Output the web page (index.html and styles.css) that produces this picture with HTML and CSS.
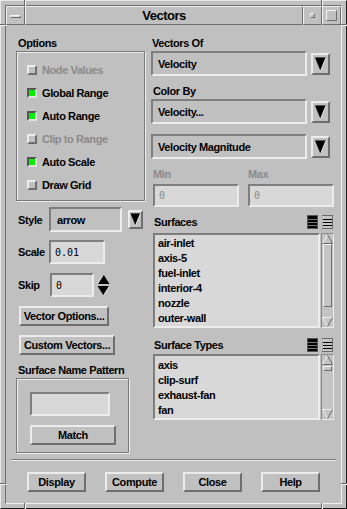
FILE: index.html
```html
<!DOCTYPE html>
<html>
<head>
<meta charset="utf-8">
<title>Vectors</title>
<link rel="stylesheet" href="styles.css">
</head>
<body>
<div class="window">
  <span class="mark mark-v mark-t1"></span>
  <span class="mark mark-v mark-t2"></span>
  <span class="mark mark-v mark-b1"></span>
  <span class="mark mark-v mark-b2"></span>
  <span class="mark mark-h mark-l1"></span>
  <span class="mark mark-h mark-r1"></span>
  <span class="mark mark-h mark-l2"></span>
  <span class="mark mark-h mark-r2"></span>
  <div class="inner">
    <div class="titlebar">
      <div class="tb-btn"><span class="menu-bar"></span></div>
      <div class="tb-title">Vectors</div>
      <div class="tb-btn"><span class="min-sq"></span></div>
      <div class="tb-btn"><span class="max-sq"></span></div>
    </div>
    <div class="body">
      <div class="main">
        <div class="col-left">
          <div class="label">Options</div>
          <div class="group options">
            <div class="check disabled"><span class="box"></span>Node Values</div>
            <div class="check"><span class="box on"></span>Global Range</div>
            <div class="check"><span class="box on"></span>Auto Range</div>
            <div class="check disabled"><span class="box"></span>Clip to Range</div>
            <div class="check"><span class="box on"></span>Auto Scale</div>
            <div class="check"><span class="box"></span>Draw Grid</div>
          </div>
          <div class="row style-row">
            <span class="rlabel">Style</span>
            <div class="option w-style">arrow</div>
            <span class="arrow-btn small">
              <svg width="11" height="15" viewBox="0 0 11 15"><polygon points="0.5,1.5 10.5,1.5 5.5,13.5" fill="#000"/><line x1="10.5" y1="1.5" x2="5.5" y2="13.5" stroke="#e8e8e8" stroke-width="1"/><line x1="0.5" y1="1.5" x2="10" y2="1.5" stroke="#555" stroke-width="1"/></svg>
            </span>
          </div>
          <div class="row scale-row">
            <span class="rlabel">Scale</span>
            <div class="field w-scale">0.01</div>
          </div>
          <div class="row skip-row">
            <span class="rlabel skip">Skip</span>
            <div class="field w-skip">0</div>
            <span class="spinner">
              <svg width="13" height="22" viewBox="0 0 13 22"><polygon points="6.5,0.5 12.5,10 0.5,10" fill="#000"/><line x1="6.5" y1="0.5" x2="0.5" y2="10" stroke="#ececec"/><polygon points="0.5,12 12.5,12 6.5,21.5" fill="#000"/><line x1="12.5" y1="12" x2="6.5" y2="21.5" stroke="#ececec"/></svg>
            </span>
          </div>
          <div class="btn btn-vo">Vector Options...</div>
          <div class="btn btn-cv">Custom Vectors...</div>
          <div class="label pattern-label">Surface Name Pattern</div>
          <div class="group pattern">
            <div class="field w-pattern"></div>
            <div class="btn btn-match">Match</div>
          </div>
        </div>
        <div class="col-right">
          <div class="label first">Vectors Of</div>
          <div class="row opt-row">
            <div class="option w-wide">Velocity</div>
            <span class="arrow-btn">
              <svg width="15" height="18" viewBox="0 0 15 18"><polygon points="2,2.5 13,2.5 7.5,16" fill="#000"/><line x1="13" y1="2.5" x2="7.5" y2="16" stroke="#e8e8e8"/><line x1="2" y1="2.5" x2="12.5" y2="2.5" stroke="#555"/></svg>
            </span>
          </div>
          <div class="label gap8">Color By</div>
          <div class="row opt-row">
            <div class="option w-wide">Velocity...</div>
            <span class="arrow-btn">
              <svg width="15" height="18" viewBox="0 0 15 18"><polygon points="2,2.5 13,2.5 7.5,16" fill="#000"/><line x1="13" y1="2.5" x2="7.5" y2="16" stroke="#e8e8e8"/><line x1="2" y1="2.5" x2="12.5" y2="2.5" stroke="#555"/></svg>
            </span>
          </div>
          <div class="row opt-row gap10">
            <div class="option w-wide">Velocity Magnitude</div>
            <span class="arrow-btn">
              <svg width="15" height="18" viewBox="0 0 15 18"><polygon points="2,2.5 13,2.5 7.5,16" fill="#000"/><line x1="13" y1="2.5" x2="7.5" y2="16" stroke="#e8e8e8"/><line x1="2" y1="2.5" x2="12.5" y2="2.5" stroke="#555"/></svg>
            </span>
          </div>
          <div class="minmax-labels">
            <span class="disabled">Min</span>
            <span class="disabled">Max</span>
          </div>
          <div class="minmax">
            <div class="field disabled-field">0</div>
            <div class="field disabled-field">0</div>
          </div>
          <div class="list-head">
            <span class="lh-label">Surfaces</span>
            <span class="lh-icons">
              <svg width="11" height="14" viewBox="0 0 11 14"><rect x="0" y="0" width="11" height="14" fill="#555"/><rect x="1" y="1" width="9" height="12" fill="#000"/><rect x="1" y="4" width="9" height="1" fill="#777"/><rect x="1" y="7" width="9" height="1" fill="#777"/><rect x="1" y="10" width="9" height="1" fill="#777"/></svg>
              <svg width="11" height="14" viewBox="0 0 11 14"><rect x="0.5" y="0.5" width="10" height="13" fill="#c4c4c4" stroke="#6a6a6a"/><line x1="1" y1="1" x2="1" y2="13" stroke="#ececec"/><line x1="1" y1="4.5" x2="10" y2="4.5" stroke="#000"/><line x1="1" y1="7.5" x2="10" y2="7.5" stroke="#000"/><line x1="1" y1="10.5" x2="10" y2="10.5" stroke="#000"/></svg>
            </span>
          </div>
          <div class="list-row surfaces">
            <div class="list">
              <div class="item">air-inlet</div>
              <div class="item">axis-5</div>
              <div class="item">fuel-inlet</div>
              <div class="item">interior-4</div>
              <div class="item">nozzle</div>
              <div class="item">outer-wall</div>
            </div>
            <div class="scroll">
              <svg class="sarrow" width="11" height="10" viewBox="0 0 11 10"><polygon points="5.5,0.5 10.5,9.5 0.5,9.5" fill="#c4c4c4"/><line x1="5.5" y1="0.5" x2="0.5" y2="9.5" stroke="#f0f0f0"/><polyline points="5.5,0.5 10.5,9.5 0.5,9.5" fill="none" stroke="#6a6a6a"/></svg>
              <div class="thumb big"></div>
              <div class="track-space"></div>
              <svg class="sarrow" width="11" height="10" viewBox="0 0 11 10"><polygon points="0.5,0.5 10.5,0.5 5.5,9.5" fill="#c4c4c4"/><polyline points="5.5,9.5 0.5,0.5 10.5,0.5" fill="none" stroke="#f0f0f0"/><line x1="10.5" y1="0.5" x2="5.5" y2="9.5" stroke="#6a6a6a"/></svg>
            </div>
          </div>
          <div class="list-head gap10">
            <span class="lh-label">Surface Types</span>
            <span class="lh-icons">
              <svg width="11" height="14" viewBox="0 0 11 14"><rect x="0" y="0" width="11" height="14" fill="#555"/><rect x="1" y="1" width="9" height="12" fill="#000"/><rect x="1" y="4" width="9" height="1" fill="#777"/><rect x="1" y="7" width="9" height="1" fill="#777"/><rect x="1" y="10" width="9" height="1" fill="#777"/></svg>
              <svg width="11" height="14" viewBox="0 0 11 14"><rect x="0.5" y="0.5" width="10" height="13" fill="#c4c4c4" stroke="#6a6a6a"/><line x1="1" y1="1" x2="1" y2="13" stroke="#ececec"/><line x1="1" y1="4.5" x2="10" y2="4.5" stroke="#000"/><line x1="1" y1="7.5" x2="10" y2="7.5" stroke="#000"/><line x1="1" y1="10.5" x2="10" y2="10.5" stroke="#000"/></svg>
            </span>
          </div>
          <div class="list-row types">
            <div class="list">
              <div class="item">axis</div>
              <div class="item">clip-surf</div>
              <div class="item">exhaust-fan</div>
              <div class="item">fan</div>
            </div>
            <div class="scroll">
              <svg class="sarrow" width="11" height="10" viewBox="0 0 11 10"><polygon points="5.5,0.5 10.5,9.5 0.5,9.5" fill="#c4c4c4"/><line x1="5.5" y1="0.5" x2="0.5" y2="9.5" stroke="#f0f0f0"/><polyline points="5.5,0.5 10.5,9.5 0.5,9.5" fill="none" stroke="#6a6a6a"/></svg>
              <div class="thumb small-thumb"></div>
              <div class="track-space"></div>
              <svg class="sarrow" width="11" height="10" viewBox="0 0 11 10"><polygon points="0.5,0.5 10.5,0.5 5.5,9.5" fill="#c4c4c4"/><polyline points="5.5,9.5 0.5,0.5 10.5,0.5" fill="none" stroke="#f0f0f0"/><line x1="10.5" y1="0.5" x2="5.5" y2="9.5" stroke="#6a6a6a"/></svg>
            </div>
          </div>
        </div>
      </div>
      <div class="separator"></div>
      <div class="actions">
        <div class="btn act">Display</div>
        <div class="btn act">Compute</div>
        <div class="btn act">Close</div>
        <div class="btn act">Help</div>
      </div>
    </div>
  </div>
</div>
</body>
</html>
```

FILE: styles.css
```css
* { box-sizing: border-box; }
html, body { margin: 0; padding: 0; }
body {
  width: 347px;
  height: 509px;
  overflow: hidden;
  background: #c0c0c0;
  font-family: "Liberation Sans", Arial, sans-serif;
  font-weight: bold;
  font-size: 11px;
  letter-spacing: -0.4px;
  color: #000;
}

/* window frame */
.window {
  position: relative;
  width: 347px;
  height: 509px;
  background: #c0c0c0;
  border: 1px solid;
  border-color: #e8e8e8 #1a1a1a #1a1a1a #e8e8e8;
  padding: 4px;
}
.mark { position: absolute; display: block; }
.mark-v { width: 2px; height: 6px; border-left: 1px solid #6a6a6a; border-right: 1px solid #f0f0f0; }
.mark-h { width: 6px; height: 2px; border-top: 1px solid #6a6a6a; border-bottom: 1px solid #f0f0f0; }
.mark-t1 { left: 23px; top: -1px; }
.mark-t2 { left: 320px; top: -1px; }
.mark-b1 { left: 23px; bottom: -1px; }
.mark-b2 { left: 320px; bottom: -1px; }
.mark-l1 { left: -1px; top: 23px; }
.mark-r1 { right: -1px; top: 23px; }
.mark-l2 { left: -1px; top: 482px; }
.mark-r2 { right: -1px; top: 482px; }

.inner {
  height: 100%;
  border: 1px solid;
  border-color: #6e6e6e #f0f0f0 #f0f0f0 #6e6e6e;
  display: flex;
  flex-direction: column;
}

/* title bar */
.titlebar { display: flex; height: 19px; flex: none; }
.tb-btn, .tb-title {
  height: 19px;
  border: 1px solid;
  border-color: #f0f0f0 #6e6e6e #6e6e6e #f0f0f0;
  display: flex;
  align-items: center;
  justify-content: center;
}
.tb-btn { width: 19px; }
.tb-title { width: 278px; font-size: 13px; letter-spacing: -0.5px; }
.menu-bar {
  display: block; width: 11px; height: 3px;
  background: #d8d8d8;
  border: 1px solid; border-color: #f4f4f4 #6e6e6e #6e6e6e #f4f4f4;
  margin-top: 1px;
}
.min-sq {
  display: block; width: 5px; height: 5px;
  border: 1px solid; border-color: #f4f4f4 #6e6e6e #6e6e6e #f4f4f4;
}
.max-sq {
  display: block; width: 11px; height: 11px;
  border: 1px solid; border-color: #f4f4f4 #6e6e6e #6e6e6e #f4f4f4;
}

/* body */
.body {
  flex: 1;
  display: flex;
  flex-direction: column;
  padding: 11px 0 0 0;
}
.main { display: flex; gap: 6px; padding-left: 10px; padding-right: 7px; }
.col-left { width: 129px; display: flex; flex-direction: column; }
.col-right { width: 183px; display: flex; flex-direction: column; }

.label { height: 14px; line-height: 14px; padding-left: 2px; white-space: nowrap; }
.label.first { padding-left: 1px; }
.pattern-label { margin-top: 8px; }
.gap8 { margin-top: 8px; }
.gap10 { margin-top: 10px; }

.group {
  margin-top: 1px;
  border: 1px solid #7a7a7a;
  box-shadow: inset 1px 1px 0 #ececec, 1px 1px 0 #ececec;
}
.options { height: 150px; padding: 6px 0 0 10px; }
.check { height: 23px; display: flex; align-items: center; gap: 5px; white-space: nowrap; }
.box {
  width: 10px; height: 10px; flex: none;
  border: 2px solid;
  border-color: #ececec #6e6e6e #6e6e6e #ececec;
  background: #c0c0c0;
}
.box.on { border-color: #555 #e0e0e0 #e0e0e0 #555; background: #00f000; }
.disabled { color: #8a8a8a; }

.row { display: flex; align-items: center; }
.rlabel { width: 33px; padding-left: 2px; flex: none; }
.rlabel.skip { width: 34px; }
.style-row { margin-top: 6px; height: 25px; }
.scale-row { margin-top: 8px; height: 24px; }
.skip-row { margin-top: 9px; height: 24px; }

.option {
  height: 25px;
  border: 2px solid;
  border-color: #7e7e7e #ececec #ececec #7e7e7e;
  display: flex;
  align-items: center;
  padding-left: 5px;
  white-space: nowrap;
}
.w-style { width: 73px; padding-left: 6px; }
.w-wide { width: 156px; }

.arrow-btn {
  width: 19px; height: 22px; margin-left: 4px;
  border: 2px solid;
  border-color: #ececec #6e6e6e #6e6e6e #ececec;
  display: flex;
}
.arrow-btn.small { width: 15px; height: 19px; margin-left: 6px; }
.arrow-btn svg { display: block; }

.field {
  height: 24px;
  border: 2px solid;
  border-color: #7e7e7e #ececec #ececec #7e7e7e;
  background: #d8d8d8;
  display: flex;
  align-items: center;
  padding-left: 4px;
  font-family: "DejaVu Sans Mono", "Liberation Mono", monospace;
  font-weight: normal;
  font-size: 10px;
  letter-spacing: 0;
}
.w-scale { width: 56px; }
.w-skip { width: 44px; }
.spinner { margin-left: 3px; width: 13px; height: 22px; display: flex; }
.spinner svg { display: block; }

.btn {
  height: 20px;
  border: 2px solid;
  border-color: #ececec #6e6e6e #6e6e6e #ececec;
  display: flex;
  align-items: center;
  justify-content: center;
  white-space: nowrap;
}
.btn-vo { margin-top: 9px; margin-left: 3px; width: 90px; }
.btn-cv { margin-top: 9px; margin-left: 3px; width: 96px; }
.pattern { width: 113px; height: 75px; padding: 13px 0 0 13px; }
.w-pattern { width: 80px; }
.btn-match { margin-top: 9px; width: 86px; }

/* right column */
.opt-row { margin-top: 1px; height: 25px; }
.opt-row.gap10 { margin-top: 10px; }
.minmax-labels {
  margin-top: 8px; height: 14px; line-height: 14px;
  display: grid; grid-template-columns: 86px 86px; column-gap: 9px;
  padding-left: 2px;
}
.minmax {
  margin-top: 3px; margin-left: 2px;
  display: grid; grid-template-columns: 86px 86px; column-gap: 9px;
}
.minmax .field { height: 23px; }
.disabled-field { color: #8a8a8a; }

.list-head {
  margin-top: 8px; height: 14px;
  display: flex; align-items: center; justify-content: space-between;
  padding-right: 1px;
}
.list-head.gap10 { margin-top: 10px; }
.lh-label { padding-left: 3px; line-height: 14px; }
.lh-icons { display: flex; gap: 4px; }
.lh-icons svg { display: block; }

.list-row { display: flex; margin-left: 2px; }
.surfaces { margin-top: 4px; height: 95px; }
.types { margin-top: 2px; height: 66px; }
.list {
  width: 167px; height: 100%;
  border: 2px solid;
  border-color: #7e7e7e #ececec #ececec #7e7e7e;
  background: #d8d8d8;
  padding: 1px 0 0 3px;
  overflow: hidden;
}
.types .list { padding-top: 1.5px; }
.item { height: 15px; line-height: 15px; white-space: nowrap; }
.scroll {
  margin-left: 1px; width: 13px; height: 100%;
  border: 1px solid;
  border-color: #8a8a8a #ececec #ececec #8a8a8a;
  background: #c4c4c4;
  display: flex; flex-direction: column; align-items: center;
}
.sarrow { display: block; flex: none; }
.thumb {
  width: 9px; flex: none;
  border: 1px solid;
  border-color: #f0f0f0 #6e6e6e #6e6e6e #f0f0f0;
  background: #c4c4c4;
}
.thumb.big { height: 63px; }
.thumb.small-thumb { height: 5px; margin-top: 1px; }
.track-space { flex: 1; }

/* bottom */
.separator {
  margin: 6px 5px 0 5px;
  height: 2px;
  border-top: 1px solid #7a7a7a;
  border-bottom: 1px solid #ececec;
}
.actions { margin-top: 11px; padding-left: 21px; display: flex; gap: 19px; }
.act { width: 59px; }
```
